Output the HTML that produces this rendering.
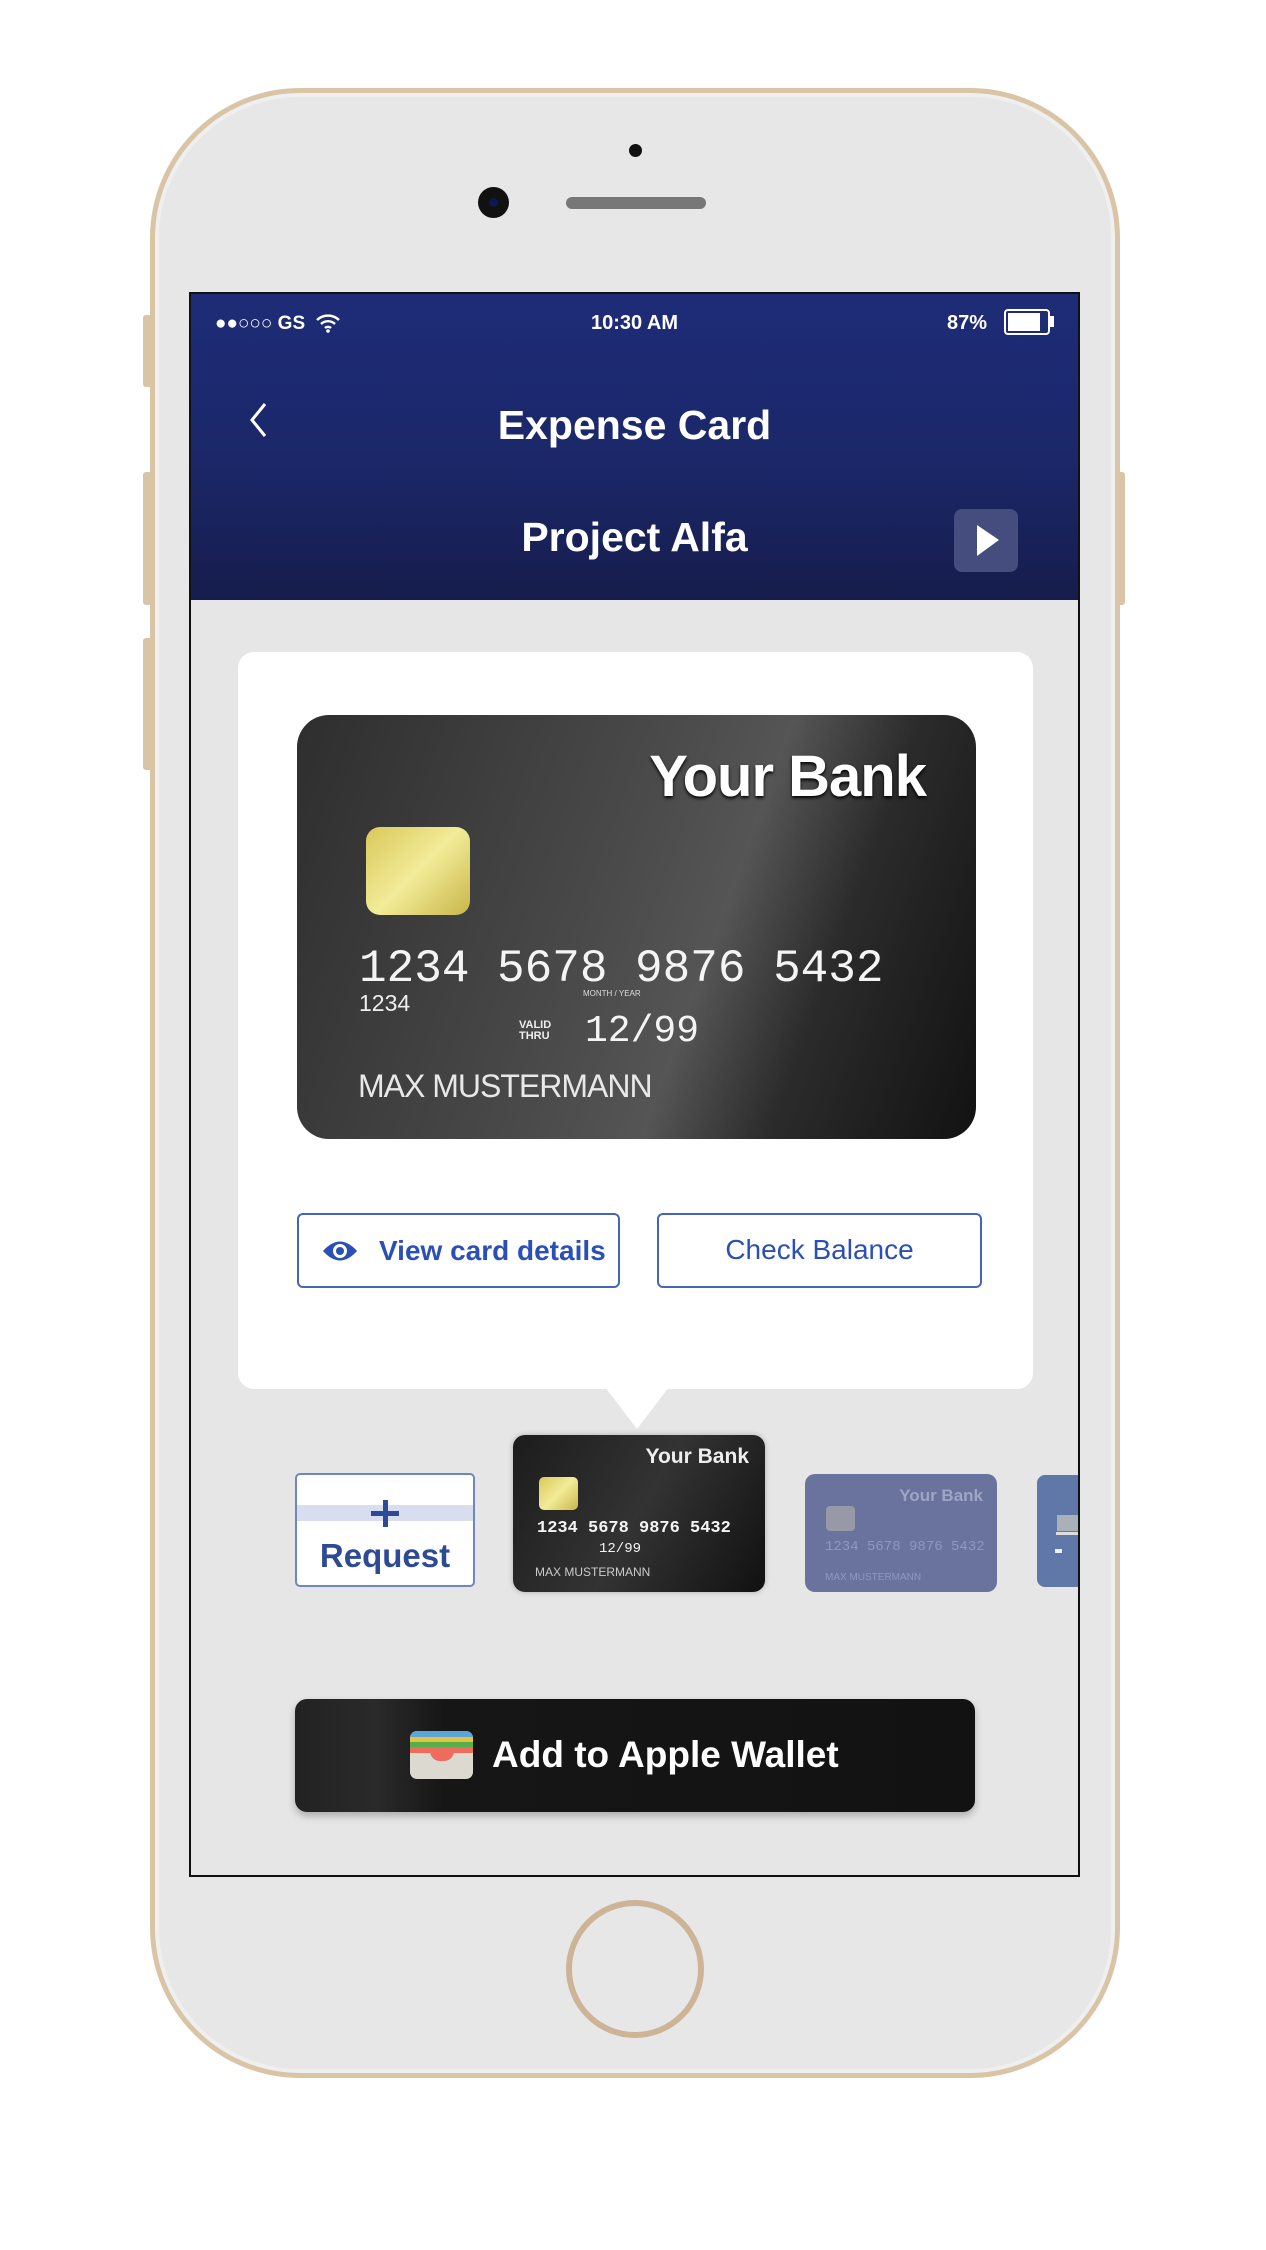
<!DOCTYPE html>
<html><head><meta charset="utf-8"><style>
*{margin:0;padding:0;box-sizing:border-box}
body{width:1266px;height:2250px;background:#fff;position:relative;overflow:hidden;font-family:"Liberation Sans",sans-serif}
.a{position:absolute}
.phone{left:150px;top:88px;width:970px;height:1990px;border-radius:150px;background:#e7e7e7;border:5px solid #d9c4a6;box-shadow:inset 0 0 0 4px #efefef}
.btn{background:#d8c4a6;border-radius:3px}
.screen{left:189px;top:292px;width:891px;height:1585px;border:2px solid #111;background:#e6e6e6;overflow:hidden}
.hdr{left:0;top:0;width:887px;height:306px;background:linear-gradient(180deg,#1e2c78 0%,#1b2768 55%,#161d4c 100%)}
.w{color:#fff}
.mono{font-family:"Liberation Mono",monospace;color:#f4f4f4;letter-spacing:1px}
.card{background:linear-gradient(110deg,#2e2e2e 0%,#4a4a4a 45%,#555 60%,#2b2b2b 75%,#121212 100%);}
.chip{background:linear-gradient(135deg,#d9c85a,#f2eb98 50%,#c9b64a);}
</style></head><body>
<div class="a btn" style="left:143px;top:315px;width:9px;height:72px"></div>
<div class="a btn" style="left:143px;top:472px;width:9px;height:133px"></div>
<div class="a btn" style="left:143px;top:638px;width:9px;height:132px"></div>
<div class="a btn" style="left:1117px;top:472px;width:8px;height:133px"></div>
<div class="a phone"></div>
<div class="a" style="left:629px;top:144px;width:13px;height:13px;border-radius:50%;background:#111"></div>
<div class="a" style="left:478px;top:187px;width:31px;height:31px;border-radius:50%;background:#111"><div class="a" style="left:11px;top:11px;width:9px;height:9px;border-radius:50%;background:#0c1a4a"></div></div>
<div class="a" style="left:566px;top:197px;width:140px;height:12px;border-radius:6px;background:#777"></div>
<div class="a" style="left:566px;top:1900px;width:138px;height:138px;border-radius:50%;border:6px solid #cdb497"></div>

<div class="a screen">
 <div class="a hdr">
  <div class="a w" style="left:24px;top:19px;font-size:19px;letter-spacing:0">●●○○○ <b>GS</b></div>
  <svg class="a" style="left:124px;top:19px" width="26" height="20" viewBox="0 0 26 20"><path d="M2 7a16 16 0 0 1 22 0M6 11a10 10 0 0 1 14 0M10 15a4.5 4.5 0 0 1 6 0" stroke="#fff" stroke-width="2.4" fill="none"/><circle cx="13" cy="18" r="1.8" fill="#fff"/></svg>
  <div class="a w" style="left:0;width:887px;top:18px;text-align:center;font-size:20px;font-weight:bold">10:30 AM</div>
  <div class="a w" style="left:756px;top:18px;font-size:20px;font-weight:bold">87%</div>
  <div class="a" style="left:813px;top:15px;width:46px;height:26px;border:2px solid #fff;border-radius:4px"><div style="margin:2px;width:32px;height:18px;background:#fff"></div></div>
  <div class="a" style="left:859px;top:22px;width:4px;height:11px;background:#fff"></div>
  <svg class="a" style="left:56px;top:107px" width="22" height="38" viewBox="0 0 22 38"><path d="M18 3L5 19L18 35" stroke="#fff" stroke-width="3" fill="none"/></svg>
  <div class="a w" style="left:0;width:887px;top:108px;text-align:center;font-size:41px;font-weight:bold">Expense Card</div>
  <div class="a w" style="left:0;width:887px;top:220px;text-align:center;font-size:41px;font-weight:bold">Project Alfa</div>
  <div class="a" style="left:763px;top:215px;width:64px;height:63px;border-radius:8px;background:#454d7e"><svg width="64" height="63"><path d="M23 16L45 31L23 47Z" fill="#fff"/></svg></div>
 </div>

 <div class="a" style="left:47px;top:358px;width:795px;height:737px;background:#fff;border-radius:16px"></div>
 <div class="a" style="left:414px;top:1093px;width:0;height:0;border-left:32px solid transparent;border-right:32px solid transparent;border-top:42px solid #fff"></div>

 <div class="a card" style="left:106px;top:421px;width:679px;height:424px;border-radius:32px">
  <div class="a" style="right:50px;top:28px;font-size:58px;font-weight:bold;color:#fff;letter-spacing:-1px;text-shadow:0 2px 3px #000">Your Bank</div>
  <div class="a chip" style="left:69px;top:112px;width:104px;height:88px;border-radius:14px"></div>
  <div class="a mono" style="left:62px;top:228px;font-size:46px;letter-spacing:0">1234 5678 9876 5432</div>
  <div class="a" style="left:62px;top:275px;font-size:23px;color:#eee">1234</div>
  <div class="a" style="left:286px;top:274px;font-size:8px;color:#ddd">MONTH / YEAR</div>
  <div class="a" style="left:222px;top:305px;font-size:11px;line-height:11px;color:#eee;font-weight:bold">VALID<br>THRU</div>
  <div class="a mono" style="left:288px;top:295px;font-size:38px;letter-spacing:0">12/99</div>
  <div class="a" style="left:61px;top:353px;font-size:32px;color:#e8e8e8;letter-spacing:-1px">MAX MUSTERMANN</div>
 </div>

 <div class="a" style="left:106px;top:919px;width:323px;height:75px;border:2px solid #4566b7;border-radius:6px;color:#2b4fb8;font-size:28px;font-weight:bold;line-height:71px;padding-left:80px">View card details
  <svg class="a" style="left:22px;top:23px" width="38" height="26" viewBox="0 0 38 26"><path d="M2 13Q19 -6 36 13Q19 32 2 13Z" fill="#2b4fb8"/><circle cx="19" cy="13" r="7" fill="#fff"/><circle cx="19" cy="13" r="4" fill="#2b4fb8"/></svg>
 </div>
 <div class="a" style="left:466px;top:919px;width:325px;height:75px;border:2px solid #4566b7;border-radius:6px;color:#2b4fb8;font-size:28px;line-height:69px;text-align:center">Check Balance</div>

 <div class="a" style="left:104px;top:1179px;width:180px;height:114px;background:#fff;border:2px solid #6f86c4;border-radius:5px">
  <div class="a" style="left:0;top:30px;width:176px;height:16px;background:#d8def0"></div>
  <div class="a" style="left:74px;top:36px;width:28px;height:5px;background:#2d4a94"></div>
  <div class="a" style="left:85.5px;top:25px;width:5px;height:27px;background:#2d4a94"></div>
  <div class="a" style="left:0;width:176px;top:62px;text-align:center;font-size:33px;font-weight:bold;color:#2d4a94">Request</div>
 </div>

 <div class="a card" style="left:322px;top:1141px;width:252px;height:157px;border-radius:12px;box-shadow:0 0 6px rgba(0,0,0,.25);background:linear-gradient(120deg,#1c1c1c,#333 50%,#111)">
  <div class="a" style="right:16px;top:10px;font-size:21px;font-weight:bold;color:#eee">Your Bank</div>
  <div class="a chip" style="left:26px;top:42px;width:39px;height:33px;border-radius:5px"></div>
  <div class="a mono" style="left:24px;top:84px;font-size:17px;font-weight:bold;letter-spacing:0">1234 5678 9876 5432</div>
  <div class="a mono" style="left:86px;top:106px;font-size:14px;letter-spacing:0">12/99</div>
  <div class="a" style="left:22px;top:130px;font-size:12px;color:#ccc">MAX MUSTERMANN</div>
 </div>

 <div class="a" style="left:614px;top:1180px;width:192px;height:118px;border-radius:10px;background:#6a739e">
  <div class="a" style="right:14px;top:12px;font-size:17px;font-weight:bold;color:#9ea5c6">Your Bank</div>
  <div class="a" style="left:21px;top:32px;width:29px;height:25px;border-radius:4px;background:#979aa6"></div>
  <div class="a mono" style="left:20px;top:65px;font-size:14px;color:#8f98c0;letter-spacing:0">1234 5678 9876 5432</div>
  <div class="a" style="left:20px;top:98px;font-size:10px;color:#8f98c0">MAX MUSTERMANN</div>
 </div>
 <div class="a" style="left:846px;top:1181px;width:50px;height:112px;border-radius:8px;background:#6078a8">
  <div class="a" style="left:20px;top:40px;width:30px;height:16px;background:#aab0b8"></div>
  <div class="a" style="left:19px;top:57px;width:30px;height:3px;background:#ddd"></div>
  <div class="a" style="left:18px;top:74px;width:7px;height:4px;background:#eee"></div>
 </div>

 <div class="a" style="left:104px;top:1405px;width:680px;height:113px;border-radius:12px;background:linear-gradient(90deg,#222 0%,#2a2a2a 12%,#161616 22%,#121212 100%);box-shadow:0 4px 8px rgba(0,0,0,.25)">
  <div class="a" style="left:115px;top:32px;width:63px;height:48px;border-radius:7px;background:#dcdad0;overflow:hidden">
   <div style="height:6px;background:#5aa6d8"></div><div style="height:5px;background:#e8c23e"></div><div style="height:5px;background:#55b04c"></div><div style="height:6px;background:#ee6b5e"></div>
   <div class="a" style="left:20px;top:20px;width:24px;height:10px;border-radius:0 0 12px 12px;background:#ee6b5e"></div>
  </div>
  <div class="a w" style="left:197px;top:35px;font-size:37px;font-weight:bold">Add to Apple Wallet</div>
 </div>
</div>
</body></html>
